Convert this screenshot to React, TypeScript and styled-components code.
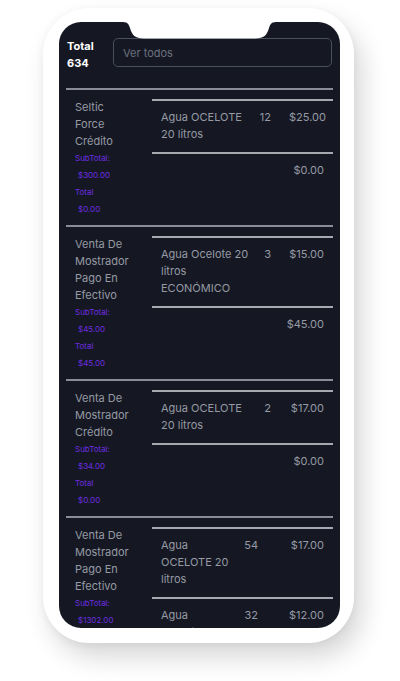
import React from 'react';
import styled, { createGlobalStyle } from 'styled-components';

const GlobalStyle = createGlobalStyle`
  html, body {
    margin: 0;
    padding: 0;
    background: #ffffff;
  }
  body {
    font-family: Inter, "Noto Sans", sans-serif;
  }
`;

const Page = styled.div`
  width: 400px;
  height: 681px;
  padding: 8px 0 0 43px;
  box-sizing: border-box;
  overflow: hidden;
`;

const PhoneBody = styled.div`
  width: 311px;
  height: 635px;
  box-sizing: border-box;
  padding: 14px 14px 15px 16px;
  border-radius: 46px;
  background: #ffffff;
  box-shadow: 8px 14px 26px rgba(0, 0, 0, 0.16), 0 2px 8px rgba(0, 0, 0, 0.05);
`;

const Screen = styled.div`
  position: relative;
  height: 100%;
  border-radius: 22px;
  background: #151823;
  overflow: hidden;
`;

const Notch = styled.svg`
  position: absolute;
  top: 0;
  left: 64px;
  display: block;
`;

const Header = styled.div`
  display: flex;
  gap: 8px;
  padding: 16px 8px 0 8px;
`;

const TotalLabel = styled.div`
  width: 38px;
  flex-shrink: 0;
  color: #ffffff;
  font-size: 11px;
  font-weight: 700;
  line-height: 17px;
`;

const Search = styled.input`
  flex: 1;
  min-width: 0;
  height: 29px;
  box-sizing: border-box;
  border: 1px solid #4a4f5d;
  border-radius: 5px;
  background: transparent;
  padding: 0 9px;
  font-family: Inter, "Noto Sans", sans-serif;
  font-size: 11px;
  color: #c9ccd3;
  outline: none;

  &::placeholder {
    color: #6c7180;
  }
`;

const List = styled.div`
  padding: 0 7px;
`;

const Rule = styled.div`
  height: 2px;
  margin-top: 16px;
  background: #8a8d96;
`;

const SaleRow = styled.div`
  display: flex;
  border-bottom: 2px solid #8a8d96;
`;

const SaleInfo = styled.div`
  width: 86px;
  flex-shrink: 0;
  box-sizing: border-box;
  padding: 9px 19px 7px 9px;
`;

const SaleName = styled.div`
  color: #969aa4;
  font-size: 11px;
  line-height: 17px;
`;

const Money = styled.div<{ $indent?: boolean }>`
  color: #6e2ce0;
  font-size: 8px;
  line-height: 17px;
  white-space: nowrap;
  padding-left: ${(p) => (p.$indent ? '3px' : '0')};
`;

const Items = styled.div`
  flex: 1;
  min-width: 0;
  margin-top: 9px;
`;

const ItemRow = styled.div<{ $cols?: string }>`
  display: grid;
  grid-template-columns: ${(p) => p.$cols || 'minmax(0, 1fr)'};
  border-top: 2px solid #a6a9b0;
`;

const Cell = styled.div<{ $align?: 'left' | 'right'; $tight?: boolean }>`
  padding: ${(p) => (p.$tight ? '8px 9px 9px 0' : '8px 9px 9px')};
  color: #969aa4;
  font-size: 11px;
  line-height: 17px;
  text-align: ${(p) => p.$align || 'left'};
`;

type Item = { name: string; qty: number; price: string };
type Sale = {
  name: string;
  subtotal: string;
  total: string;
  cols: string;
  items: Item[];
};

const sales: Sale[] = [
  {
    name: 'Seltic Force Crédito',
    subtotal: '$300.00',
    total: '$0.00',
    cols: '99px 29px minmax(0, 1fr)',
    items: [{ name: 'Agua OCELOTE 20 litros', qty: 12, price: '$25.00' }],
  },
  {
    name: 'Venta De Mostrador Pago En Efectivo',
    subtotal: '$45.00',
    total: '$45.00',
    cols: '110px 18px minmax(0, 1fr)',
    items: [{ name: 'Agua Ocelote 20 litros ECONÓMICO', qty: 3, price: '$15.00' }],
  },
  {
    name: 'Venta De Mostrador Crédito',
    subtotal: '$34.00',
    total: '$0.00',
    cols: '99px 29px minmax(0, 1fr)',
    items: [{ name: 'Agua OCELOTE 20 litros', qty: 2, price: '$17.00' }],
  },
  {
    name: 'Venta De Mostrador Pago En Efectivo',
    subtotal: '$1302.00',
    total: '$1302.00',
    cols: '86px 29px minmax(0, 1fr)',
    items: [
      { name: 'Agua OCELOTE 20 litros', qty: 54, price: '$17.00' },
      { name: 'Agua Ocelote 20 litros ECONÓMICO', qty: 32, price: '$12.00' },
    ],
  },
];

const App = () => {
  return (
    <Page>
      <GlobalStyle />
      <PhoneBody>
        <Screen>
          <Notch width="153" height="17" viewBox="0 0 153 17">
            <path
              d="M0 0 C5 0 6 3 7 6 C9 13 12 16.5 21 16.5 L132 16.5 C141 16.5 144 13 146 6 C147 3 148 0 153 0 Z"
              fill="#ffffff"
            />
          </Notch>
          <Header>
            <TotalLabel>
              Total
              <br />
              634
            </TotalLabel>
            <Search placeholder="Ver todos" />
          </Header>
          <List>
            <Rule />
            {sales.map((sale, i) => (
              <SaleRow key={i}>
                <SaleInfo>
                  <SaleName>{sale.name}</SaleName>
                  <Money>SubTotal:</Money>
                  <Money $indent>{sale.subtotal}</Money>
                  <Money>Total</Money>
                  <Money $indent>{sale.total}</Money>
                </SaleInfo>
                <Items>
                  {sale.items.map((item, j) => (
                    <ItemRow key={j} $cols={sale.cols}>
                      <Cell>{item.name}</Cell>
                      <Cell $align="right" $tight>
                        {item.qty}
                      </Cell>
                      <Cell $align="right">{item.price}</Cell>
                    </ItemRow>
                  ))}
                  <ItemRow>
                    <Cell $align="right">{sale.total}</Cell>
                  </ItemRow>
                </Items>
              </SaleRow>
            ))}
          </List>
        </Screen>
      </PhoneBody>
    </Page>
  );
};

export default App;
